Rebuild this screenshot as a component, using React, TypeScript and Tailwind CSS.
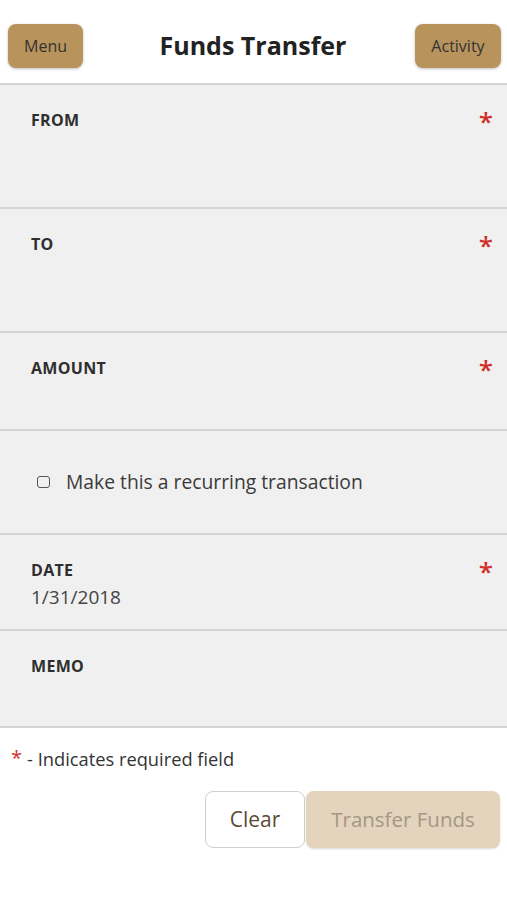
import { ReactNode } from "react";

const font = { fontFamily: '"Open Sans", "Noto Sans", sans-serif' };

function Field({
  label,
  required,
  height,
  children,
}: {
  label: string;
  required?: boolean;
  height: string;
  children?: ReactNode;
}) {
  return (
    <div className={`${height} bg-[#f0f0f0] border-b-2 border-[#d3d3d3] pl-[31px] pr-[14px] pt-[24px]`}>
      <div className="flex items-start justify-between">
        <span className="text-[16px] leading-[22px] font-bold text-[#2e2e2e] tracking-[0.3px]">
          {label}
        </span>
        {required && (
          <span className="text-[26px] leading-[26px] text-[#d0302a] font-semibold -mt-[1px]">*</span>
        )}
      </div>
      {children}
    </div>
  );
}

export default function App() {
  return (
    <div className="w-[507px] min-h-[900px] bg-white" style={font}>
      <header className="h-[85px] border-b-2 border-[#d3d3d3] flex items-center justify-between px-[8px] pt-[9px]">
        <button className="w-[75px] h-[44px] rounded-lg bg-[#b8945c] text-[16px] text-[#333] shadow-[0_1px_3px_rgba(0,0,0,0.25)]">
          Menu
        </button>
        <h1 className="text-[25px] font-bold text-[#222] ml-[8px]">Funds Transfer</h1>
        <button className="w-[86px] h-[44px] rounded-lg bg-[#b8945c] text-[16px] text-[#333] shadow-[0_1px_3px_rgba(0,0,0,0.25)] -mr-[2px]">
          Activity
        </button>
      </header>

      <Field label="FROM" required height="h-[124px]" />
      <Field label="TO" required height="h-[124px]" />
      <Field label="AMOUNT" required height="h-[98px]" />

      <div className="h-[104px] bg-[#f0f0f0] border-b-2 border-[#d3d3d3] flex items-center pl-[37px]">
        <span className="w-[13px] h-[12px] border-[1.5px] border-[#555] rounded-[3px] mr-[16px]" />
        <span className="text-[19.3px] text-[#3a3a3a]">Make this a recurring transaction</span>
      </div>

      <Field label="DATE" required height="h-[96px]">
        <div className="text-[19px] leading-[24px] text-[#444] mt-[1px]">1/31/2018</div>
      </Field>
      <Field label="MEMO" height="h-[97px]" />

      <div className="pl-[11px] pt-[18px] text-[18.3px] text-[#333] flex items-start">
        <span className="text-[#d0302a] text-[20px] leading-[24px] mr-[5px]">*</span>
        <span className="leading-[26px]">- Indicates required field</span>
      </div>

      <div className="flex justify-end pr-[7px] mt-[19px]">
        <button className="w-[100px] h-[57px] rounded-lg bg-white border border-[#cfcfcf] text-[21px] text-[#5b4a33]">
          Clear
        </button>
        <button className="w-[194px] h-[57px] rounded-lg bg-[#e4d4bd] text-[20.5px] text-[#a39786] ml-[1px] shadow-[0_1px_2px_rgba(0,0,0,0.15)]">
          Transfer Funds
        </button>
      </div>
    </div>
  );
}
